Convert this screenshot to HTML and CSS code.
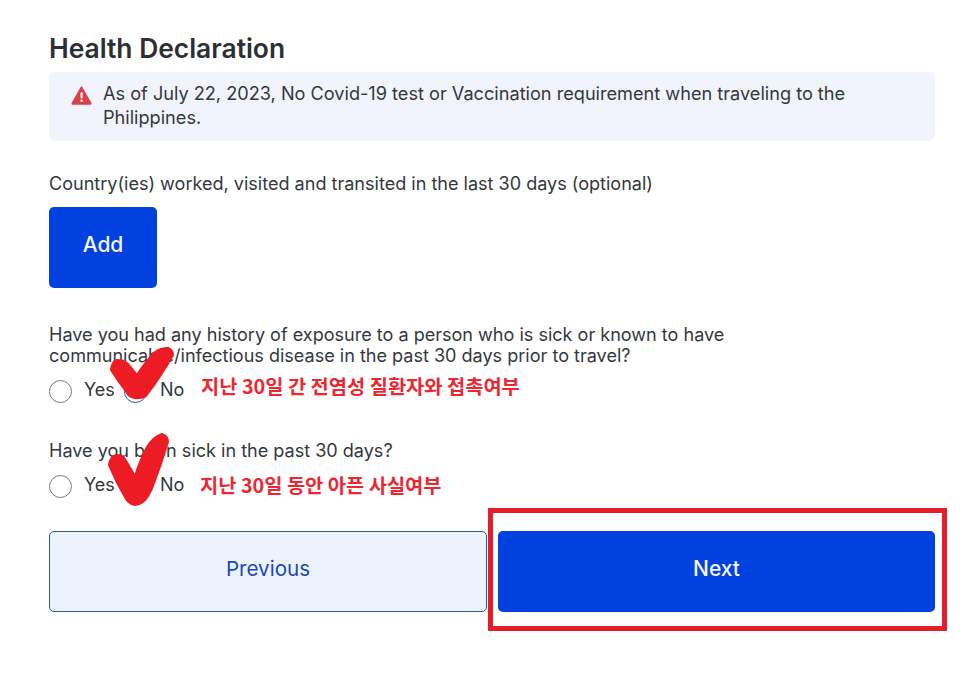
FILE: index.html
```html
<!DOCTYPE html>
<html lang="en">
<head>
<meta charset="utf-8">
<title>Health Declaration</title>
<link rel="stylesheet" href="styles.css">
</head>
<body>
<main class="page">
  <h1 class="title">Health Declaration</h1>
  <div class="alert">
    <svg class="alert-icon" viewBox="0 0 22 20" aria-hidden="true">
      <path d="M11 1.2 L20.8 18.2 Q21 19 20 19 L2 19 Q1 19 1.2 18.2 Z" fill="#d9424a" stroke="#d9424a" stroke-width="1.6" stroke-linejoin="round"/>
      <rect x="10" y="6.5" width="2.2" height="6.5" rx="1" fill="#fff"/>
      <circle cx="11.1" cy="15.4" r="1.3" fill="#fff"/>
    </svg>
    <p class="alert-text">As of July 22, 2023, No Covid-19 test or Vaccination requirement when traveling to the Philippines.</p>
  </div>
  <p class="label countries">Country(ies) worked, visited and transited in the last 30 days (optional)</p>
  <button class="btn btn-primary add"><span class="btn-raised">Add</span></button>
  <p class="label q1">Have you had any history of exposure to a person who is sick or known to have communicable/infectious disease in the past 30 days prior to travel?</p>
  <div class="radios radios-first">
    <span class="radio"></span><span class="opt">Yes</span>
    <span class="radio radio-blue"></span><span class="opt">No</span>
  </div>
  <p class="label q2">Have you been sick in the past 30 days?</p>
  <div class="radios radios-second">
    <span class="radio"></span><span class="opt">Yes</span>
    <span class="radio radio-covered"></span><span class="opt">No</span>
  </div>
  <div class="actions">
    <button class="btn btn-secondary"><span class="btn-raised-sm">Previous</span></button>
    <button class="btn btn-primary"><span class="btn-raised-sm">Next</span></button>
  </div>
</main>
<svg class="marks" viewBox="0 0 966 699" aria-hidden="true">
  <path d="M168 348 Q173 350 173 355 Q160 378 146 396 Q140 399 135 398 Q129 397 127 393 Q118 381 111 370 Q112 361 117 360 Q124 360 128 364 L137 375 Q145 362 155 352 Q161 348 168 348 Z" />
  <path d="M162 434 Q168 436 168 442 Q161 465 153 486 Q149 497 143 502 Q139 505 135 505 Q129 504 126 499 Q116 482 109 465 Q110 456 117 455 Q122 455 125 459 L135 476 Q140 460 147 447 Q153 437 162 434 Z" />
</svg>
<div class="frame"></div>
<span class="note note-1">지난 30일 간 전염성 질환자와 접촉여부</span>
<span class="note note-2">지난 30일 동안 아픈 사실여부</span>
</body>
</html>
```
FILE: styles.css
```css
* { box-sizing: border-box; }
html, body { margin: 0; padding: 0; background: #fff; }
body { width: 966px; height: 699px; overflow: hidden; position: relative; font-family: Inter, "Liberation Sans", sans-serif; color: #33383c; }
.page { padding: 32px 31px 0 49px; display: flex; flex-direction: column; align-items: flex-start; }
.title { margin: 0; font-size: 26.4px; line-height: 32px; font-weight: 600; color: #2c3034; }
.alert { margin-top: 8px; width: 100%; height: 69px; background: #f1f4fd; border-radius: 6px; padding: 9px 22px; display: flex; gap: 11px; }
.alert-icon { width: 21px; height: 19px; margin-top: 5px; flex: none; }
.alert-text { margin: 0; font-size: 18.15px; line-height: 24px; }
.label { margin: 0; font-size: 18.06px; line-height: 21px; }
.countries { margin-top: 32px; }
.btn { border: 0; border-radius: 5px; font-family: inherit; font-size: 21px; font-weight: 400; cursor: pointer; }
.btn-primary { background: #0041e0; color: #f4f7ff; font-weight: 500; }
.btn-secondary { background: #edf3fd; color: #1a47b8; border: 1px solid #2559ad; font-size: 20.6px; }
.add { margin-top: 13px; width: 108px; height: 81px; }
.btn-raised { display: block; margin-top: -7px; }
.btn-raised-sm { display: block; margin-top: -6px; }
.q1 { margin-top: 36px; max-width: 720px; }
.radios { display: flex; align-items: center; height: 24px; margin-top: 12px; }
.radio { width: 23px; height: 23px; border: 1.5px solid #77797c; border-radius: 50%; flex: none; position: relative; top: 1px; }
.radio-blue { border-color: #2a56b0; }
.radio-covered { border-color: transparent; }
.opt { font-size: 18px; width: 52px; padding-left: 12px; flex: none; position: relative; top: -1px; }
.opt:last-child { padding-left: 13px; }
.q2 { margin-top: 38px; }
.radios-second { margin-top: 12px; }
.actions { margin-top: 34px; width: 100%; display: grid; grid-template-columns: 438px 437px; gap: 11px; }
.actions .btn { height: 81px; }
.marks { position: absolute; left: 0; top: 0; width: 966px; height: 699px; fill: #ed1c24; stroke: #ed1c24; stroke-width: 2; stroke-linejoin: round; pointer-events: none; }
.frame { position: absolute; left: 488px; top: 508px; width: 459px; height: 123px; border: 5px solid #e31e2a; }
.note { position: absolute; font-family: "Noto Sans CJK KR", sans-serif; font-weight: 700; font-size: 19.8px; line-height: 24px; color: #ed2630; white-space: nowrap; }
.note-1 { left: 201px; top: 374px; }
.note-2 { left: 200px; top: 473px; }
```
